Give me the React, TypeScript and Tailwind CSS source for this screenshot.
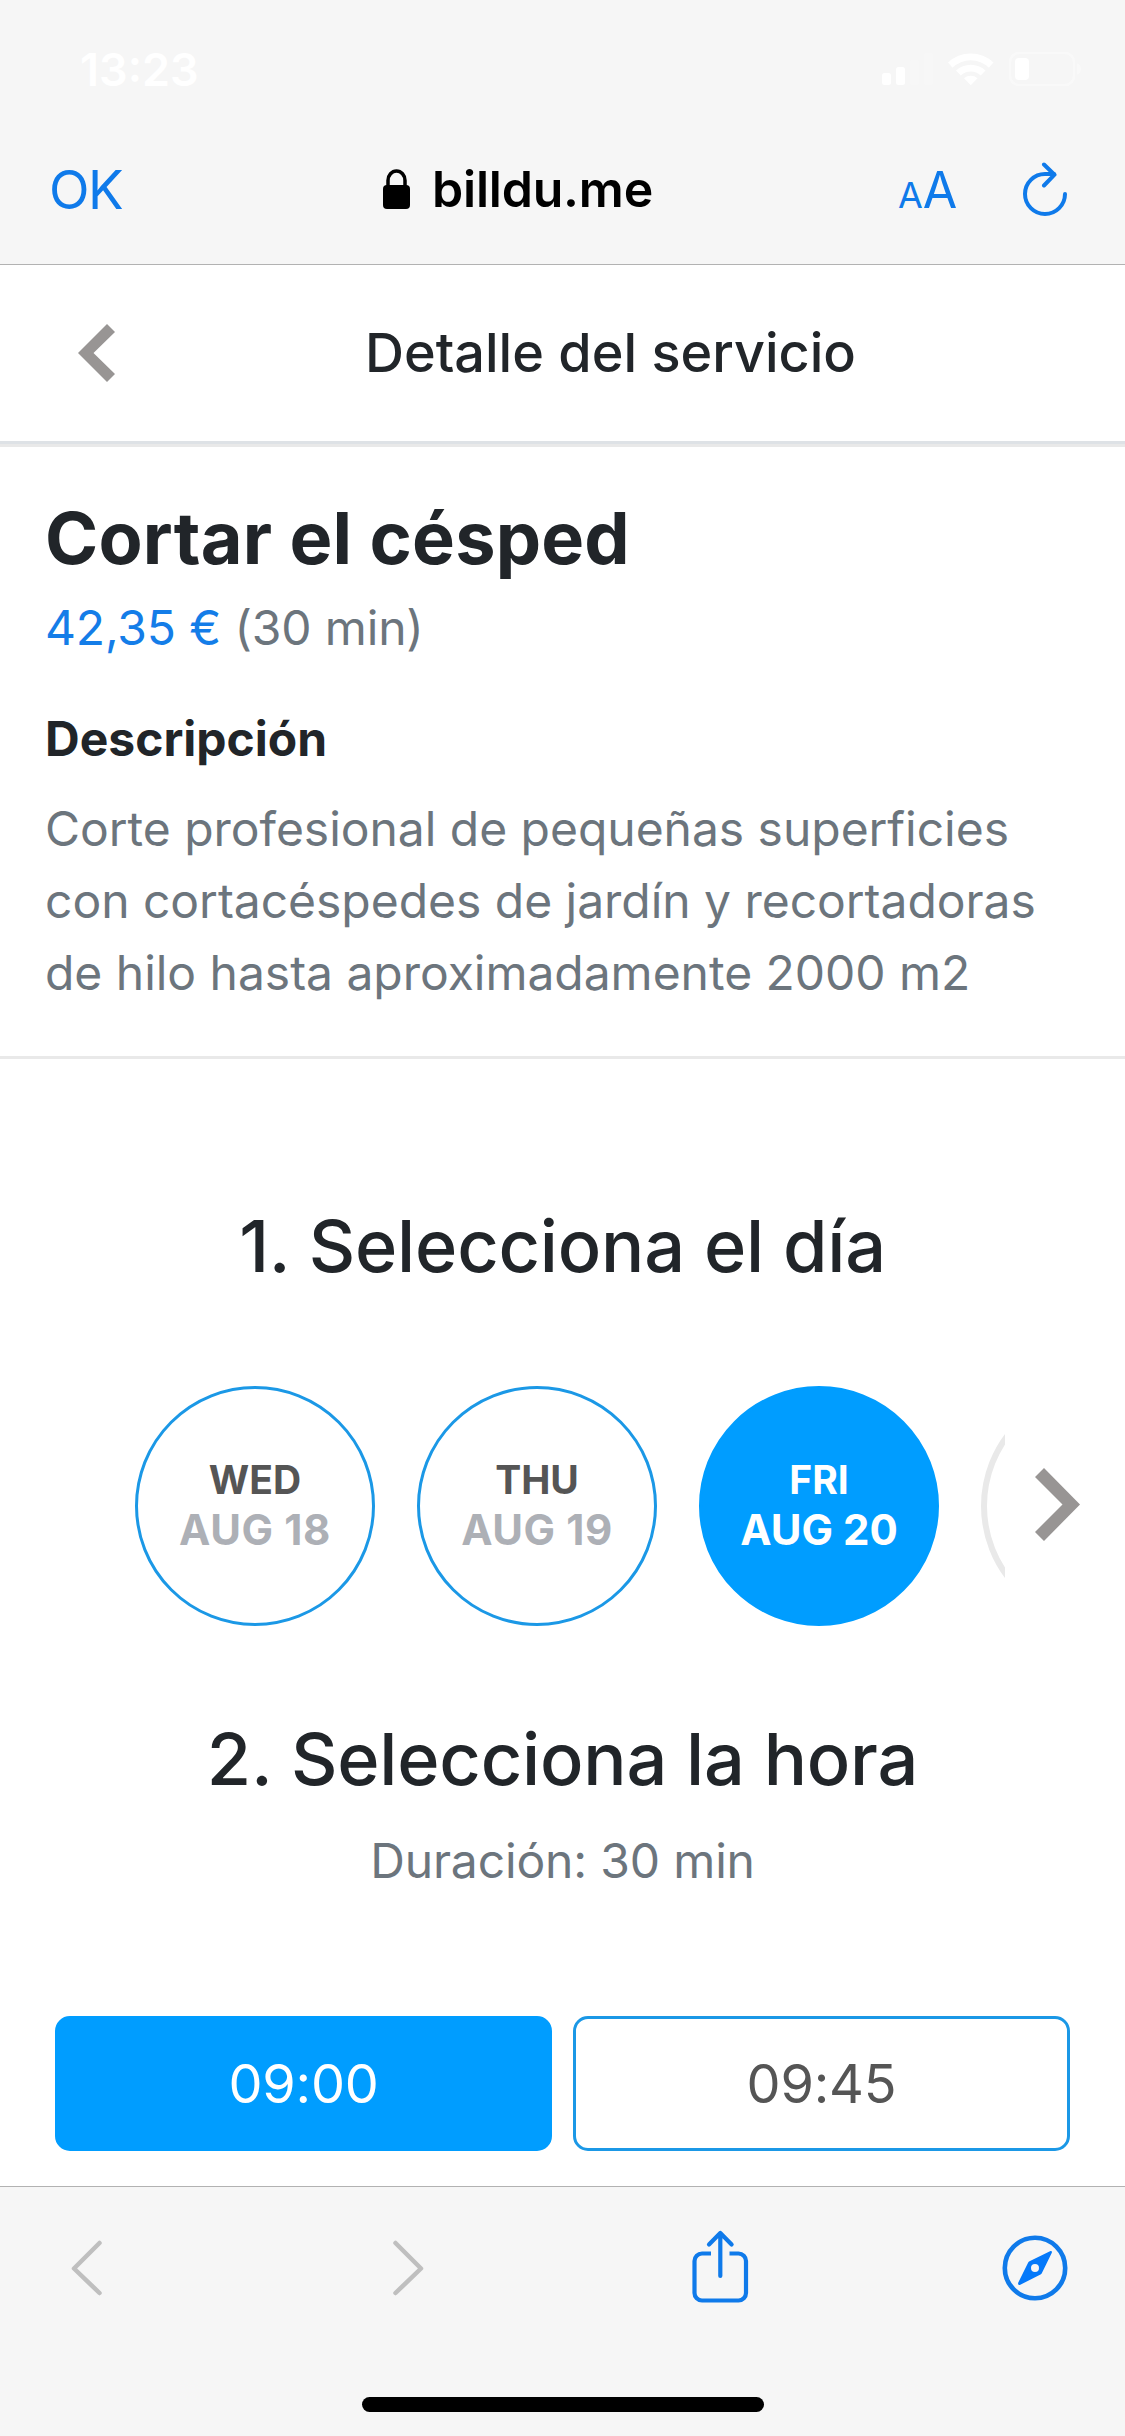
import clsx from "clsx";

const days = [
  { weekday: "WED", date: "AUG 18", selected: false },
  { weekday: "THU", date: "AUG 19", selected: false },
  { weekday: "FRI", date: "AUG 20", selected: true },
];

const slots = [
  { time: "09:00", selected: true },
  { time: "09:45", selected: false },
];

function StatusIcons() {
  return (
    <svg width="202" height="36" viewBox="881 51 202 36" fill="#fff">
      <rect x="882" y="73" width="9" height="12" rx="2.5" />
      <rect x="896" y="67" width="9" height="18" rx="2.5" />
      <rect x="910" y="60" width="9" height="25" rx="2.5" opacity="0.15" />
      <rect x="924" y="53" width="9" height="32" rx="2.5" opacity="0.15" />
      <path d="M948 62.5a33 33 0 0 1 45.500 0l-4.600 5.200a26 26 0 0 0-36.300 0z" />
      <path d="M956 70.500a21.500 21.500 0 0 1 29.500 0l-4.800 5a14.500 14.500 0 0 0-19.900 0z" />
      <path d="M964 78.300a10.500 10.500 0 0 1 13.500 0l-6.750 7z" />
      <rect x="1010" y="53" width="64" height="32" rx="9" fill="none" stroke="#fff" strokeWidth="2.500" opacity="0.400" />
      <rect x="1015" y="58" width="14" height="22" rx="4" />
      <path d="M1077 63.500a5.800 5.800 0 0 1 0 11z" opacity="0.400" />
    </svg>
  );
}

function BrowserBar() {
  return (
    <header className="h-[265px] shrink-0 border-b border-[#b2b2b2] bg-[#f6f6f6]">
      <div className="flex h-[138px] items-center justify-between pr-[42px] pl-[80px]">
        <span className="text-[45px] leading-none font-semibold text-white">13:23</span>
        <StatusIcons />
      </div>
      <div className="grid h-[104px] grid-cols-[383px_1fr_225px] items-center">
        <span className="pl-[49px] text-[53px] leading-none tracking-[-1.5px] text-[#0f7aea]">OK</span>
        <div className="flex items-center gap-[22px]">
          <svg className="-mt-[3px]" width="27" height="40" viewBox="0 0 27 40">
            <path d="M5 18V11.500a8.500 9.500 0 0 1 17 0V18" fill="none" stroke="#000" strokeWidth="3.500" />
            <rect y="16" width="27" height="24" rx="4" />
          </svg>
          <span className="-mt-[2px] text-[50px] leading-none font-semibold tracking-[-0.2px] text-black">billdu.me</span>
        </div>
        <div className="-ml-[2px] flex items-center justify-between pr-[57px]">
          <span className="flex items-baseline leading-none text-[#0f7aea]">
            <span className="text-[36px]">A</span>
            <span className="text-[50px]">A</span>
          </span>
          <svg width="46" height="56" viewBox="1022 162 46 56" fill="none" stroke="#0f7aea" strokeWidth="4" strokeLinecap="round" strokeLinejoin="round">
            <path d="M1065 194a20 20 0 1 1-20-20h9" />
            <path d="M1044 164.500l10.500 10.200L1044 185.500" />
          </svg>
        </div>
      </div>
    </header>
  );
}

function PageTitle() {
  return (
    <div className="flex h-[182px] shrink-0 items-center border-b-3 border-[#e9e9e9] pb-[4px] shadow-[inset_0_-3px_0_#dee2e6]">
      <svg className="ml-[78px]" width="37" height="58" viewBox="0 0 37 58" fill="#989594">
        <path d="M0 29L29 0l8 8-21.500 21L37 50l-8 8z" />
      </svg>
      <h1 className="ml-[250px] text-[54px] leading-none font-medium text-[#212529]">Detalle del servicio</h1>
    </div>
  );
}

function ServiceInfo() {
  return (
    <section className="h-[612px] shrink-0 border-b-3 border-[#e9e9e9] pl-[45px]">
      <h2 className="pt-[46px] text-[72px] leading-[90px] font-bold tracking-[0.2px] text-[#212529]">Cortar el césped</h2>
      <p className="mt-[9px] text-[48px] leading-[72px] tracking-[-0.15px] text-[#6c757d]">
        <span className="text-[#147de8]">42,35 €</span> (30 min)
      </p>
      <h3 className="mt-[39px] text-[48px] leading-[72px] font-bold text-[#212529]">Descripción</h3>
      <p className="mt-[18px] text-[48px] leading-[72px] tracking-[-0.03px] text-[#6c757d]">
        Corte profesional de pequeñas superficies
        <br />
        con cortacéspedes de jardín y recortadoras
        <br />
        de hilo hasta aproximadamente 2000 m2
      </p>
    </section>
  );
}

function DayPicker() {
  return (
    <section className="shrink-0">
      <h2 className="mt-[142px] text-center text-[72px] leading-[90px] font-medium tracking-[-0.2px] text-[#212529]">
        1. Selecciona el día
      </h2>
      <div className="mt-[95px] flex items-center">
        <div className="ml-[135px] flex w-[870px] gap-[42px] overflow-hidden">
          {days.map((d) => (
            <button
              key={d.date}
              type="button"
              className={clsx(
                "flex size-[240px] shrink-0 flex-col items-center justify-center rounded-full border-3 pb-[3px] leading-[50px] font-bold",
                d.selected ? "border-[#009dff] bg-[#009dff] text-white" : "border-[#1b98e6] text-[#555]",
              )}
            >
              <span className="text-[39px]">{d.weekday}</span>
              <span className={clsx("text-[42px]", !d.selected && "tracking-[0.6px] text-[#adb0b6]")}>{d.date}</span>
            </button>
          ))}
          <div className="size-[240px] shrink-0 rounded-full border-6 border-[#e9e9e9]" />
        </div>
        <svg className="-mt-[4px] ml-[30px]" width="45" height="73" viewBox="0 0 45 73" fill="#989594">
          <path d="M9 0l36 36.500L9 73l-9-9 27.500-27.500L0 9z" />
        </svg>
      </div>
    </section>
  );
}

function TimePicker() {
  return (
    <section className="flex-1">
      <h2 className="mt-[88px] text-center text-[72px] leading-[90px] font-medium tracking-[-0.2px] text-[#212529]">
        2. Selecciona la hora
      </h2>
      <p className="mt-[21px] text-center text-[48px] leading-[72px] tracking-[-0.15px] text-[#6c757d]">Duración: 30 min</p>
      <div className="mt-[119px] flex gap-[21px] px-[55px]">
        {slots.map((s) => (
          <button
            key={s.time}
            type="button"
            className={clsx(
              "h-[135px] flex-1 rounded-[15px] border-3 text-[54px] tracking-[-0.2px]",
              s.selected ? "border-[#009dff] bg-[#009dff] text-white" : "border-[#1b98e6] text-[#555]",
            )}
          >
            {s.time}
          </button>
        ))}
      </div>
    </section>
  );
}

function Toolbar() {
  return (
    <footer className="flex h-[250px] shrink-0 flex-col items-center border-t border-[#b2b2b2] bg-[#f6f6f6]">
      <div className="flex h-[162px] w-full items-center pl-[70px]">
        <svg width="34" height="58" viewBox="0 0 34 58" fill="none" stroke="#bfbfbf" strokeWidth="4.500" strokeLinecap="round" strokeLinejoin="round">
          <path d="M29.500 4L4 29.500 29.500 54" />
        </svg>
        <svg className="ml-[287px]" width="34" height="58" viewBox="0 0 34 58" fill="none" stroke="#bfbfbf" strokeWidth="4.500" strokeLinecap="round" strokeLinejoin="round">
          <path d="M4.500 4L30 29.500 4.500 54" />
        </svg>
        <svg className="ml-[266px]" width="58" height="76" viewBox="691 2229 58 76" fill="none" stroke="#0f7aea" strokeWidth="4.200" strokeLinecap="round" strokeLinejoin="round">
          <path d="M711 2252.500h-9a7.500 7.500 0 0 0-7.500 7.500v32a7.500 7.500 0 0 0 7.500 7.500h36.500a7.500 7.500 0 0 0 7.500-7.500v-32a7.500 7.500 0 0 0-7.500-7.500H729.500" strokeLinecap="butt" />
          <path d="M720.300 2275V2232.500M709 2243.500l11.300-11.500 11.300 11.500" />
        </svg>
        <svg className="ml-[253px]" width="66" height="66" viewBox="0 0 66 66">
          <circle cx="33" cy="33" r="30.200" fill="none" stroke="#0f7aea" strokeWidth="4.600" />
          <path
            d="M48 16.200L27.500 26.200a3 3 0 0 0-1.300 1.300L16.300 47.500c-.8 1.800.4 3 2 2.200L38.500 39.500a3 3 0 0 0 1.300-1.300L49.700 18c.8-1.600-.2-2.600-1.700-1.800zM33 29a4 4 0 1 1 0 8 4 4 0 0 1 0-8z"
            fill="#0579fa"
            fillRule="evenodd"
          />
        </svg>
      </div>
      <div className="mt-[48px] h-[15px] w-[402px] rounded-full bg-black" />
    </footer>
  );
}

export default function App() {
  return (
    <div className="flex h-[2436px] w-[1125px] flex-col overflow-hidden bg-white font-['Inter',sans-serif]">
      <BrowserBar />
      <PageTitle />
      <ServiceInfo />
      <DayPicker />
      <TimePicker />
      <Toolbar />
    </div>
  );
}
